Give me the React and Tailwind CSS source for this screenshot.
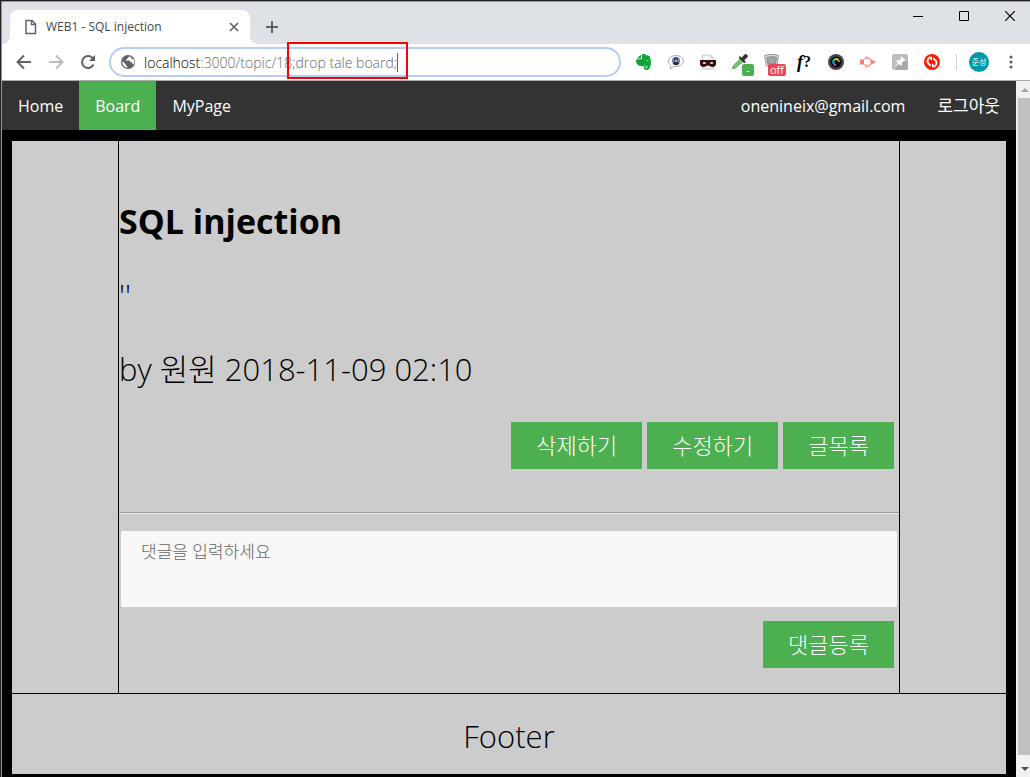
import React from 'react';

const FONT = "font-['Open_Sans','Noto_Sans_CJK_KR',sans-serif]";

function Tab() {
  return (
    <div className="relative flex h-[34px] w-60 items-center rounded-t-lg bg-white pl-[15px] pr-[10px]">
      <svg className="absolute -left-2 bottom-0 size-2" viewBox="0 0 8 8"><path d="M8 0v8H0a8 8 0 0 0 8-8z" fill="#fff" /></svg>
      <svg className="absolute -right-2 bottom-0 size-2" viewBox="0 0 8 8"><path d="M0 0v8h8a8 8 0 0 1-8-8z" fill="#fff" /></svg>
      <svg className="h-4 w-3" viewBox="0 0 12 16" fill="none" stroke="#5f6368" strokeWidth="1.5">
        <path d="M1 1.5h6L10.5 5v9.5H1z" /><path d="M6.5 1.5v4h4" />
      </svg>
      <span className="ml-[9px] flex-1 text-[12px] text-[#45484c]">WEB1 - SQL injection</span>
      <button aria-label="Close tab" className="flex size-3 items-center justify-center">
        <svg className="size-[10px]" viewBox="0 0 10 10" stroke="#5f6368" strokeWidth="1.7"><path d="M1 1l8 8M9 1l-8 8" /></svg>
      </button>
    </div>
  );
}

function TitleBar() {
  return (
    <div className="flex h-[42px] bg-[#dee1e6]">
      <div className="flex flex-1 items-end pl-2">
        <Tab />
        <button aria-label="New tab" className="ml-4 mb-[11px] size-3">
          <svg className="size-3" viewBox="0 0 12 12" stroke="#5f6368" strokeWidth="2"><path d="M6 0v12M0 6h12" /></svg>
        </button>
      </div>
      <div className="flex items-start gap-9 pr-[15px] pt-[9px]">
        <button aria-label="Minimize"><svg className="block size-[10px]" viewBox="0 0 10 10"><path d="M0 5h10v1H0z" /></svg></button>
        <button aria-label="Maximize"><svg className="block size-[10px]" viewBox="0 0 10 10" fill="none" stroke="#000"><path d="M.5.5h9v9h-9z" /></svg></button>
        <button aria-label="Close"><svg className="block size-[10px]" viewBox="0 0 10 10" stroke="#000" strokeWidth="1.2"><path d="M0 0l10 10M10 0L0 10" /></svg></button>
      </div>
    </div>
  );
}

function Extensions() {
  return (
    <div className="flex items-center gap-3">
      <button aria-label="Evernote">
        <svg className="block size-5" viewBox="0 0 20 20">
          <path d="M7 2.500L3 6.500h3.300c.6 0 .8-.3.8-.8zM8 2.300c2-.8 3.600 0 4 1 1.500.1 3 .3 3.600 1 .9 1.500 1.900 6 .9 9.500-.6 2.700-1.500 4.200-4 4.200-2 0-2.900-1.300-2.700-2.900.2-1.300 1.500-1.800 2.700-1.500v1.400c-1 0-1.200.5-1 1 .4.5 2 .2 2-1.200 0-1.200-1.600-1.700-2.800-1.800-.3.900-.8 1.300-1.800 1.200C4.500 13.800 2.500 13 2.100 9.300 2 8 2.300 7.300 3 7.300h3.500C7.600 7.300 8 6.800 8 5.800z" fill="#0da636" />
          <path d="M12.500 9c.3-1.300 1.800-1.300 2 .2-.6-.4-1.300-.4-2-.2z" fill="#fff" />
        </svg>
      </button>
      <button aria-label="Speech">
        <svg className="block size-5" viewBox="0 0 20 20">
          <path d="M10 3.500c4.200 0 7.500 2.500 7.500 5.500s-3.300 5.500-7.500 5.500c-1 0-2-.2-2.800-.4-.6 1.500-1.700 2.400-3.200 2.900.7-1.200 1-2.300.8-3.600C3.300 12.500 2.500 10.800 2.500 9c0-3 3.300-5.500 7.500-5.500z" fill="#fff" stroke="#999" strokeWidth=".8" />
          <circle cx="10" cy="9" r="4.200" fill="#7d8ca5" /><circle cx="10" cy="7.500" r="2.200" fill="#263f91" />
          <path d="M7 12c.7-2 1.800-3 2.800-3s2.400 1 3.400 2.700c-1.700 1.700-4.400 1.900-6.200.3z" fill="#392b34" /><path d="M9.200 7.500h2v2.500h-2z" fill="#e7b39c" />
        </svg>
      </button>
      <button aria-label="Privacy mask">
        <svg className="block size-5" viewBox="0 0 20 20">
          <path d="M4.500 17V3h8l3 3v11z" fill="#f1f2f4" stroke="#b9bdc1" strokeWidth=".8" /><path d="M12.500 3v3h3z" fill="#c9cdd0" />
          <path d="M2 8h16v4c0 2-1.500 3-3.500 3-2 0-3-1.500-4.500-1.500S7.500 15 5.500 15C3.500 15 2 14 2 12z" fill="#33110f" />
          <ellipse cx="6.300" cy="11" rx="1.700" ry=".9" fill="#ddd" /><ellipse cx="13.700" cy="11" rx="1.700" ry=".9" fill="#ddd" />
        </svg>
      </button>
      <button aria-label="Color picker" className="relative">
        <svg className="block size-5" viewBox="0 0 20 20">
          <path d="M2.500 16.500l.7-2.500L10.500 6.700l2.500 2.500L5.500 16z" fill="#63d85a" stroke="#7c847d" strokeWidth="1" />
          <path d="M10 5.500l4.500 4.500" stroke="#333" strokeWidth="2.200" strokeLinecap="round" /><path d="M11.500 6.500l3.200-3.700c1-1.200 3.600.8 2.500 2.300L13.500 8.500z" fill="#333" stroke="#333" />
        </svg>
        <span className="absolute left-3 top-3 flex h-3 w-3 items-center justify-center rounded-[2px] bg-[#4caf50] text-[10px] leading-3 text-white">-</span>
      </button>
      <button aria-label="Blocker" className="relative">
        <svg className="block size-5" viewBox="0 0 20 20"><path d="M2.500 3.500c4-1.500 10-1.500 14 0L15 14H4.500z" fill="#d8d8d8" stroke="#999" /><path d="M5 5.500c3-1 6.500-1 9.500 0L13.500 12H6z" fill="#a5a5a5" stroke="#777" strokeWidth=".8" /></svg>
        <span className="absolute left-[6px] top-3 flex h-3 w-[18px] items-center justify-center rounded-[2px] bg-[#eb4658] text-[11px] leading-3 text-white">off</span>
      </button>
      <button aria-label="Font finder" className="flex h-5 w-5 items-center justify-center font-['Liberation_Serif',serif] text-[18px] font-bold leading-5"><i>f</i><span className="text-[16px]">?</span></button>
      <button aria-label="Camera">
        <svg className="block size-5" viewBox="0 0 20 20">
          <circle cx="10" cy="10" r="8" fill="#44474d" /><circle cx="10" cy="10" r="5.500" fill="#080808" />
          <g fill="none" strokeWidth="2"><path d="M7.200 9.500a3 3 0 0 1 2-2.300" stroke="#10d7b0" /><path d="M9.200 7.200a3 3 0 0 1 3 .8" stroke="#b9e829" /><path d="M7.200 9.500a3 3 0 0 0 .8 2.500" stroke="#29a5ef" /><path d="M8 12a3 3 0 0 0 2 1" stroke="#d73cd6" /><path d="M12.200 8a3 3 0 0 1 .8 2" stroke="#e8822c" /></g>
        </svg>
      </button>
      <button aria-label="Recorder">
        <svg className="block size-5" viewBox="0 0 20 20">
          <path d="M2 7.500h4v5H2z" fill="#ff7878" /><path d="M7.500 5v3M7.500 12v3M8 4.800l4 2.500M8 15.200l4-2.500" fill="none" stroke="#ff9c9c" strokeWidth="1.800" /><path d="M12.500 6.800l5.500 3.200-5.500 3.200z" fill="#ff8080" />
        </svg>
      </button>
      <button aria-label="Pin">
        <svg className="block size-5" viewBox="0 0 20 20">
          <rect x="2" y="2" width="16" height="16" rx="2.500" fill="#bcbcbc" /><path d="M5 15.500l10.500-8L18 10v5.500a2.500 2.500 0 0 1-2.500 2.500H7.500z" fill="#a8a8a8" />
          <path d="M11.500 4.500l4 4-1 .7-.8-.3-2 2 .2 2-1 1-2.200-2.200L5 15.200 4.800 15l3-3.900L6 9.300l1-1 2 .2 2-2-.3-1z" fill="#fff" />
        </svg>
      </button>
      <button aria-label="Sync">
        <svg className="block size-5" viewBox="0 0 20 20">
          <circle cx="10" cy="10" r="8" fill="#f91c05" />
          <g fill="none" stroke="#fff" strokeWidth="1.800"><path d="M8.800 13.800L6.300 11.300c-1.500-1.600-1-3.800.9-5M11.200 6.200l2.500 2.500c1.500 1.600 1 3.800-.9 5" /></g>
          <path d="M6 4.800h4v4zM14 15.200h-4v-4z" fill="#fff" />
        </svg>
      </button>
    </div>
  );
}

function Toolbar() {
  return (
    <div className="flex h-9 items-center bg-white pl-[14px] pr-[17px]">
      <div className="flex items-center gap-4">
        <button aria-label="Back"><svg className="block size-4" viewBox="0 0 16 16" fill="none" stroke="#5f6368" strokeWidth="2"><path d="M15 8H2M8 1.500L1.500 8 8 14.500" /></svg></button>
        <button aria-label="Forward"><svg className="block size-4" viewBox="0 0 16 16" fill="none" stroke="#babcbe" strokeWidth="2"><path d="M1 8h13M8 1.500L14.500 8 8 14.500" /></svg></button>
        <button aria-label="Reload"><svg className="block size-4" viewBox="0 0 16 16" fill="none" stroke="#5f6368" strokeWidth="2"><path d="M13.500 10.500A6 6 0 1 1 12.300 3.800L14 5.500" /><path d="M15 1v6H9z" fill="#5f6368" stroke="none" /></svg></button>
      </div>
      <div className="relative ml-[13px] flex h-[30px] flex-1 items-center rounded-full border-2 border-[#b3cdf8] pl-[10px] text-[14px]">
        <svg className="size-[14px] shrink-0" viewBox="0 0 14 14">
          <circle cx="7" cy="7" r="7" fill="#5f6368" />
          <path d="M1.400 6l3.500 3.500v1l1.500 1.300v1C3 12.500 1 9.500 1.400 6zM8 1.300c-.2 1.500-1.500 1.800-2 2.500-.3 1-1.500.8-1.500 1.700h4l1.500 2h1.500v1.500l1.200.5c1-1.800 1-3.800-.2-5.500h-2V2.500z" fill="#fff" />
        </svg>
        <div contentEditable suppressContentEditableWarning role="textbox" aria-label="Address" className="ml-[9px] whitespace-pre font-light text-[#65696e] outline-none"><span className="text-black">localhost</span>:3000/topic/18;drop tale board;</div>
        <span className="h-[19px] w-px bg-[#5f6368]" />
        <div className="absolute left-[176px] -top-[7px] h-[37px] w-[121px] border-2 border-[#f00]" />
      </div>
      <div className="ml-[13px] flex items-center">
        <Extensions />
        <span className="ml-[14px] h-4 w-px bg-[#d0d2d5]" />
        <button className="ml-3 flex size-5 items-center justify-center whitespace-nowrap rounded-full bg-[#0097a7] text-[8px] text-white">준성</button>
        <button aria-label="Menu" className="ml-5"><svg className="block h-4 w-1" viewBox="0 0 4 16" fill="#5f6368"><circle cx="2" cy="3" r="1.600" /><circle cx="2" cy="8" r="1.600" /><circle cx="2" cy="13" r="1.600" /></svg></button>
      </div>
    </div>
  );
}

function NavLink({ children, active }) {
  return <a href="#" className={active ? 'bg-[#4caf50] px-4' : 'px-4'}>{children}</a>;
}

function GreenButton({ children }) {
  return <button className="h-[47px] bg-[#4caf50] px-[25px] text-[22px] leading-[27px] text-white">{children}</button>;
}

function Page() {
  return (
    <div className="flex flex-1 flex-col bg-black">
      <nav className="flex h-[49px] bg-[#333] text-[16px] leading-[50px] text-white">
        <NavLink>Home</NavLink>
        <NavLink active>Board</NavLink>
        <NavLink>MyPage</NavLink>
        <span className="flex-1" />
        <NavLink>onenineix@gmail.com</NavLink>
        <NavLink><span className="text-[17px]">로그아웃</span></NavLink>
      </nav>
      <div className="mx-[10px] mt-[11px] mb-[3px] flex-1 bg-[#ccc] text-[31px] font-light leading-[42px]">
        <div className="grid grid-cols-[106px_1fr_106px] border-b border-black">
          <div />
          <main className="border-x border-black pb-[25px]">
            <h1 className="pt-[59px] text-[34px] font-bold">SQL injection</h1>
            <p className="mt-8">''</p>
            <p className="mt-8">by 원원 2018-11-09 02:10</p>
            <div className="mt-8 flex justify-end gap-[5px] pr-[5px]">
              <GreenButton>삭제하기</GreenButton>
              <GreenButton>수정하기</GreenButton>
              <GreenButton>글목록</GreenButton>
            </div>
            <hr className="mt-[43px] h-[2px] border-b border-t border-b-[#eee] border-t-[#9a9a9a]" />
            <textarea aria-label="댓글" placeholder="댓글을 입력하세요" className="mx-[2px] mt-[17px] block h-[76px] w-[calc(100%-4px)] resize-none rounded-[2px] bg-[#f8f8f8] px-5 py-[10px] text-[17px] font-light leading-[22px] outline-none placeholder:text-[#666]" />
            <div className="mt-[14px] flex justify-end pr-[5px]"><GreenButton>댓글등록</GreenButton></div>
          </main>
          <div />
        </div>
        <footer className="flex h-20 items-center justify-center pt-[3px]">Footer</footer>
      </div>
    </div>
  );
}

function Scrollbar() {
  return (
    <div className="flex w-[14px] flex-col bg-[#f1f1f1] pl-[2px]">
      <svg className="h-[17px] w-3" viewBox="0 0 12 17"><path d="M3 11l4-4 4 4z" fill="#a3a3a3" /></svg>
      <div className="flex-1 bg-[#c1c1c1]" />
      <svg className="h-[22px] w-3" viewBox="0 0 12 22"><path d="M3 12h8l-4 4z" fill="#505050" /></svg>
    </div>
  );
}

export default function App() {
  return (
    <div className={`flex min-h-screen flex-col border-l border-t border-[#222] text-black ${FONT}`}>
      <div className="flex flex-1 flex-col border-l border-t border-[#c08a5c]">
        <TitleBar />
        <Toolbar />
        <div className="flex flex-1 border-t border-[#a9a9a9]">
          <Page />
          <Scrollbar />
        </div>
      </div>
    </div>
  );
}
